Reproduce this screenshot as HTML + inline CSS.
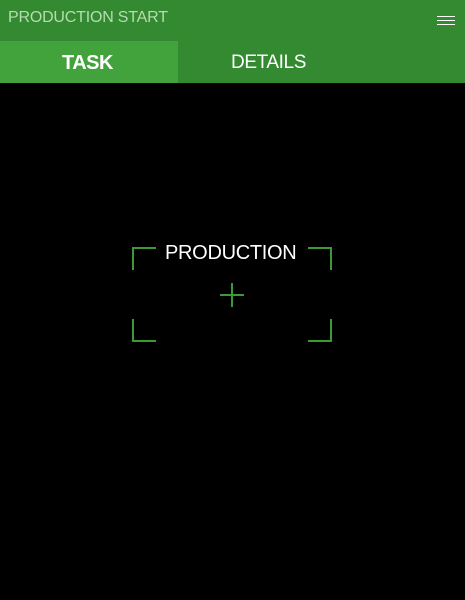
<!DOCTYPE html><html><head><style>
body{margin:0;width:465px;height:600px;background:#000;font-family:"Liberation Sans",sans-serif;overflow:hidden;position:relative}
.h{position:absolute;left:0;top:0;width:465px;height:41px;background:#348a30}
.t{position:absolute;left:8px;top:9px;color:#b5dcb1;font-size:16px;letter-spacing:-0.2px}
.tb{position:absolute;top:41px;height:42px;width:465px;background:#348a30}
.a{position:absolute;left:0;top:0;width:178px;height:42px;background:#42a33c}
.l{position:absolute;top:11px;color:#fff;font-size:19px}
.m{position:absolute;left:437px;width:18px;height:1px;background:#fff}
.p{position:absolute;left:165px;top:242px;color:#fff;font-size:20px;letter-spacing:-0.3px}
</style></head><body>
<div class="h"><div class="t">PRODUCTION START</div>
<div class="m" style="top:16px"></div><div class="m" style="top:20px"></div><div class="m" style="top:24px"></div></div>
<div class="tb"><div class="a"></div>
<div class="l" style="left:62px;font-weight:bold;font-size:20px;letter-spacing:-0.5px">TASK</div>
<div class="l" style="left:231px;letter-spacing:-0.4px">DETAILS</div></div>
<div class="p">PRODUCTION</div>
<svg width="465" height="600" style="position:absolute;left:0;top:0" fill="none" stroke="#3a9a35" stroke-width="2">
<path d="M133 270V248H156M308 248H331V270M133 319V341H156M308 341H331V319M220 295H244M232 283V307"/>
</svg>
</body></html>
